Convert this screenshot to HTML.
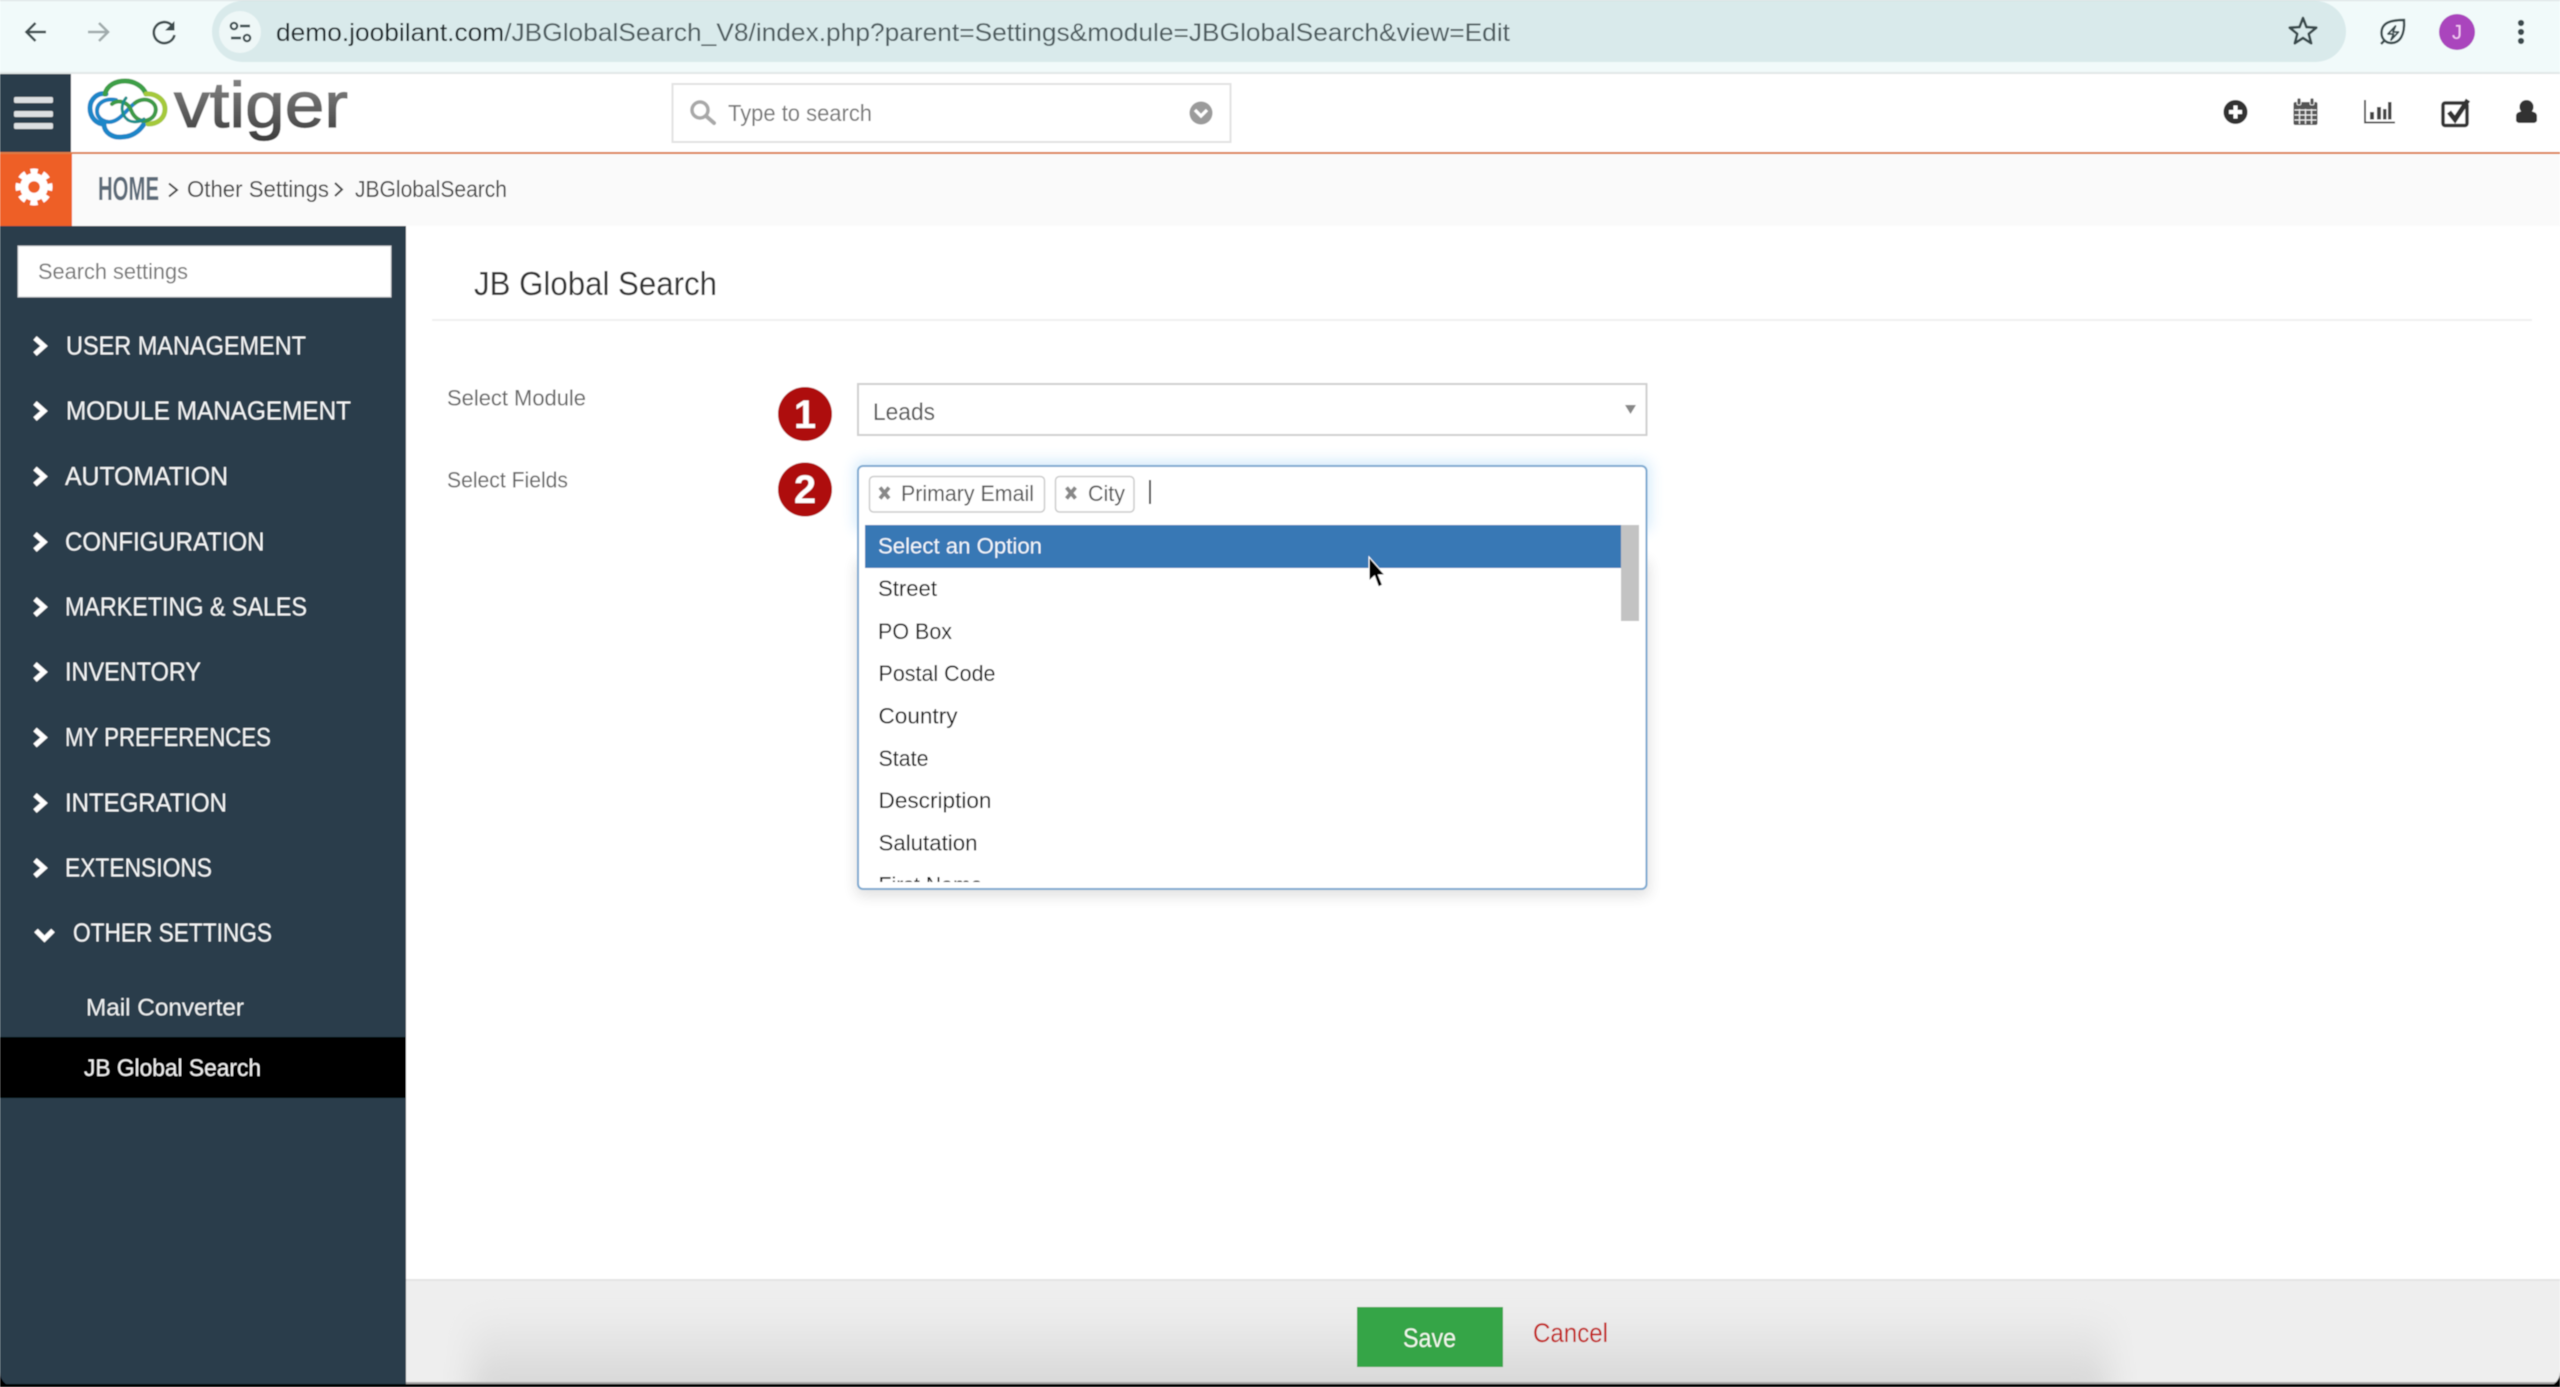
<!DOCTYPE html>
<html lang="en">
<head>
<meta charset="utf-8">
<title>JB Global Search</title>
<style>
html,body{margin:0;padding:0;background:#fff;width:2560px;height:1387px;overflow:hidden}
svg{display:block;position:absolute;left:0;top:0}
text{font-family:"Liberation Sans",sans-serif}
</style>
</head>
<body>
<svg xmlns="http://www.w3.org/2000/svg" width="2560" height="1387" viewBox="0 0 2560 1387">
<defs>
<filter id="soft" x="0" y="0" width="100%" height="100%"><feGaussianBlur stdDeviation="0.45"/></filter>
<filter id="b8" x="-10%" y="-30%" width="120%" height="160%"><feGaussianBlur stdDeviation="7"/></filter>
<filter id="b20" x="-10%" y="-60%" width="120%" height="220%"><feGaussianBlur stdDeviation="16"/></filter>
<linearGradient id="vt" x1="0" y1="0" x2="0" y2="1"><stop offset="0" stop-color="#8f8f8f"/><stop offset="1" stop-color="#3c3c3c"/></linearGradient>
<linearGradient id="fs" x1="0" y1="0" x2="0" y2="1"><stop offset="0" stop-color="#eaeaea"/><stop offset="0.500" stop-color="#dfdfdf"/><stop offset="1" stop-color="#cfcfcf"/></linearGradient>
<clipPath id="list"><rect x="860" y="525" width="780" height="357"/></clipPath>
<clipPath id="foot"><rect x="406" y="1281" width="2154" height="103"/></clipPath>
</defs>
<g filter="url(#soft)">
<rect width="2560" height="1387" fill="#ffffff"/>

<!-- browser chrome -->
<rect x="0" y="0" width="2560" height="73" fill="#f1fafa"/>
<rect x="0" y="0" width="2560" height="1" fill="#d6dedf"/>
<rect x="0" y="72" width="2560" height="2" fill="#e1e7e7"/>
<rect x="212" y="1" width="2134" height="61" rx="30.5" fill="#d9eaeb"/>
<path d="M46 32H27M35.500 23l-9 9 9 9" fill="none" stroke="#3d4b4d" stroke-width="2.600"/>
<path d="M88 32h20M99 23l9 9-9 9" fill="none" stroke="#a0abac" stroke-width="2.600"/>
<path d="M171.500 25A10.500 10.500 0 1 0 174.500 35" fill="none" stroke="#3d4b4d" stroke-width="2.600"/>
<path d="M174.500 21v9.500h-9.500z" fill="#3d4b4d"/>
<circle cx="240" cy="32" r="21" fill="#eef7f7"/>
<circle cx="234" cy="26" r="3.200" fill="none" stroke="#36464a" stroke-width="2.200"/>
<path d="M240 26h10M231 38h10" stroke="#36464a" stroke-width="2.400"/>
<circle cx="247" cy="38" r="3.200" fill="none" stroke="#36464a" stroke-width="2.200"/>
<text x="276" y="41" font-size="25" textLength="1234" lengthAdjust="spacingAndGlyphs" fill="#4e5c5f"><tspan fill="#1c282b">demo.joobilant.com</tspan>/JBGlobalSearch_V8/index.php?parent=Settings&amp;module=JBGlobalSearch&amp;view=Edit</text>
<polygon points="2303,18 2306.500,27.100 2316.300,27.700 2308.700,33.900 2311.200,43.300 2303,38 2294.800,43.300 2297.300,33.900 2289.700,27.700 2299.500,27.100" fill="none" stroke="#38484b" stroke-width="2.600" stroke-linejoin="round"/>
<path d="M2404 20C2392 20 2381.500 22 2381.500 33C2381.500 39 2386 43 2391 43C2400 43 2405 35 2404 20ZM2385 40l-4 4" fill="none" stroke="#38484b" stroke-width="2.400"/>
<path d="M2395.500 26L2388 34H2393.500L2391 40L2398.500 32H2393z" fill="none" stroke="#38484b" stroke-width="1.800" stroke-linejoin="round"/>
<circle cx="2457" cy="32" r="18" fill="#aa45bd"/>
<text x="2457" y="39" font-size="20" text-anchor="middle" fill="#f3c9f3">J</text>
<circle cx="2521" cy="23" r="3.100" fill="#3b4a4d"/><circle cx="2521" cy="32" r="3.100" fill="#3b4a4d"/><circle cx="2521" cy="41" r="3.100" fill="#3b4a4d"/>

<!-- app header -->
<rect x="0" y="74" width="71" height="78" fill="#2c3c4b"/>
<rect x="14" y="97" width="39" height="6" rx="1.500" fill="#dcdfe1"/>
<rect x="14" y="111" width="39" height="6" rx="1.500" fill="#dcdfe1"/>
<rect x="14" y="123" width="39" height="6" rx="1.500" fill="#dcdfe1"/>

<!-- vtiger logo -->
<g fill="none" stroke-linecap="round">
<path d="M106 94C98 92 90 99 90 108C90 118 97 124 104 124C104 133 113 138 122 137C131 137 139 132 144 124" stroke="#1b86c8" stroke-width="5"/>
<path d="M105 94C107 85 116 81 125 81C134 81 143 86 146 94" stroke="#3d9f46" stroke-width="5"/>
<path d="M146 94C156 93 165 100 165 109C165 118 158 124 148 124" stroke="#a5c93a" stroke-width="5"/>
<path d="M116 100C105 98 97 103 97 111C97 119 106 124 114 121C122 118 128 108 135 103" stroke="#1b86c8" stroke-width="4"/>
<path d="M112 104C118 99 128 102 131 110C134 118 141 123 148 120C156 117 158 108 153 103C148 98 140 99 135 103" stroke="#3c9a46" stroke-width="4"/>
<path d="M126 98C121 104 120 114 128 120C133 123 140 122 144 119" stroke="#1c8f8a" stroke-width="3"/>
</g>
<text x="174" y="127" font-size="64" textLength="174" lengthAdjust="spacingAndGlyphs" fill="url(#vt)" stroke="url(#vt)" stroke-width="1.200">vtiger</text>

<!-- global search -->
<rect x="672.500" y="84" width="558" height="58" fill="#fff" stroke="#e2e2e2" stroke-width="2"/>
<circle cx="700" cy="110" r="8" fill="none" stroke="#a8a8a8" stroke-width="3.500"/>
<path d="M706 116l8 7" stroke="#a8a8a8" stroke-width="4" stroke-linecap="round"/>
<text x="728" y="121" font-size="23" textLength="144" lengthAdjust="spacingAndGlyphs" fill="#777">Type to search</text>
<circle cx="1201" cy="113" r="11.500" fill="#9b9b9b"/>
<path d="M1195 110l6 6 6-6" fill="none" stroke="#fff" stroke-width="3.200"/>

<!-- header icons -->
<circle cx="2235.500" cy="112" r="12" fill="#333"/>
<path d="M2229 110h13v4h-13zM2233.500 105.500h4v13h-4z" fill="#fff"/>
<rect x="2293.500" y="102" width="24" height="23" rx="2" fill="#555"/>
<path d="M2299.500 109v15M2305.500 109v15M2311.500 109v15M2294.500 110h22M2294.500 115h22M2294.500 120h22" stroke="#fff" stroke-width="1.300" opacity="0.900"/>
<rect x="2297" y="98" width="4" height="7" rx="1.500" fill="#555" stroke="#fff" stroke-width="0.800"/>
<rect x="2310" y="98" width="4" height="7" rx="1.500" fill="#555" stroke="#fff" stroke-width="0.800"/>
<path d="M2365 100V122.500H2395" fill="none" stroke="#444" stroke-width="1.800"/>
<rect x="2370" y="112" width="4" height="7.500" fill="#444"/><rect x="2377" y="107" width="4" height="12.500" fill="#444"/><rect x="2383" y="109" width="3.500" height="10.500" fill="#444"/><rect x="2388" y="102" width="3.500" height="17.500" fill="#444"/>
<rect x="2443" y="103" width="24" height="22.500" rx="2" fill="none" stroke="#333" stroke-width="3.500"/>
<path d="M2449 112L2455 119.500L2468 100" fill="none" stroke="#333" stroke-width="5"/>
<circle cx="2526.500" cy="107" r="7" fill="#333"/>
<path d="M2516 120V116C2516 112 2521 111 2526.500 111C2532 111 2537 112 2537 116V120C2537 122 2535 123 2533 123H2520C2518 123 2516 122 2516 120Z" fill="#333"/>
<rect x="0" y="152" width="2560" height="2" fill="#dd7d45"/>

<!-- breadcrumb row -->
<rect x="72" y="154" width="2488" height="72" fill="#fafafa"/>
<rect x="0" y="154" width="72" height="72" fill="#ee5f26"/>
<circle cx="34" cy="187" r="14" fill="#fff"/>
<circle cx="34" cy="187" r="15.500" fill="none" stroke="#fff" stroke-width="6" stroke-dasharray="7 5.175" stroke-dashoffset="3.500"/>
<circle cx="34" cy="187" r="5.800" fill="#ee5f26"/>
<text x="98" y="200" font-size="33" font-weight="bold" textLength="61" lengthAdjust="spacingAndGlyphs" fill="#5c6a78">HOME</text>
<path d="M169 183.500L177 190L169 196.500" fill="none" stroke="#444" stroke-width="2"/>
<text x="187" y="197" font-size="23" textLength="142" lengthAdjust="spacingAndGlyphs" fill="#444">Other Settings</text>
<path d="M335 183L342 189.500L335 196" fill="none" stroke="#444" stroke-width="2"/>
<text x="355" y="197" font-size="23" textLength="152" lengthAdjust="spacingAndGlyphs" fill="#444">JBGlobalSearch</text>

<!-- sidebar -->
<rect x="0" y="226" width="406" height="1161" fill="#2c3c4b"/>
<rect x="18" y="246" width="373" height="51" fill="#fff" stroke="#c9ced2" stroke-width="1"/>
<text x="38" y="279" font-size="22" textLength="150" lengthAdjust="spacingAndGlyphs" fill="#777">Search settings</text>
<g fill="none" stroke="#fff" stroke-width="5">
<path d="M35 338L44 346L35 354"/><path d="M35 403L44 411L35 419"/><path d="M35 468.500L44 476.500L35 484.500"/>
<path d="M35 534L44 542L35 550"/><path d="M35 599L44 607L35 615"/><path d="M35 664L44 672L35 680"/>
<path d="M35 729.500L44 737.500L35 745.500"/><path d="M35 795L44 803L35 811"/><path d="M35 860L44 868L35 876"/>
<path d="M36 930.500L44.500 939L53 930.500"/>
</g>
<g font-size="26" fill="#f4f6f7">
<text x="66" y="354.500" textLength="240" lengthAdjust="spacingAndGlyphs">USER MANAGEMENT</text>
<text x="66" y="419.500" textLength="285" lengthAdjust="spacingAndGlyphs">MODULE MANAGEMENT</text>
<text x="65" y="485" textLength="163" lengthAdjust="spacingAndGlyphs">AUTOMATION</text>
<text x="65" y="550.500" textLength="199.500" lengthAdjust="spacingAndGlyphs">CONFIGURATION</text>
<text x="65" y="615.500" textLength="242" lengthAdjust="spacingAndGlyphs">MARKETING &amp; SALES</text>
<text x="65" y="680.500" textLength="136" lengthAdjust="spacingAndGlyphs">INVENTORY</text>
<text x="65" y="746" textLength="206" lengthAdjust="spacingAndGlyphs">MY PREFERENCES</text>
<text x="65" y="811.500" textLength="162" lengthAdjust="spacingAndGlyphs">INTEGRATION</text>
<text x="65" y="876.500" textLength="147" lengthAdjust="spacingAndGlyphs">EXTENSIONS</text>
<text x="73" y="941.500" textLength="199" lengthAdjust="spacingAndGlyphs">OTHER SETTINGS</text>
</g>
<text x="86" y="1015.500" font-size="24" textLength="158" lengthAdjust="spacingAndGlyphs" fill="#eef1f2">Mail Converter</text>
<rect x="0" y="1037" width="406" height="61" fill="#000"/>
<text x="84" y="1076" font-size="24" textLength="177" lengthAdjust="spacingAndGlyphs" fill="#f2f2f2">JB Global Search</text>

<!-- main -->
<text x="474" y="295" font-size="33" textLength="243" lengthAdjust="spacingAndGlyphs" fill="#333">JB Global Search</text>
<rect x="432" y="319" width="2100" height="2" fill="#f0f0f0"/>
<text x="447" y="405.500" font-size="22" textLength="139" lengthAdjust="spacingAndGlyphs" fill="#666">Select Module</text>
<text x="447" y="487.500" font-size="22" textLength="121" lengthAdjust="spacingAndGlyphs" fill="#666">Select Fields</text>

<circle cx="805" cy="414" r="27" fill="#ae0c0c"/>
<text x="805" y="428" font-size="40" font-weight="bold" text-anchor="middle" fill="#fff">1</text>
<circle cx="805" cy="489.500" r="27" fill="#ae0c0c"/>
<text x="805" y="503" font-size="40" font-weight="bold" text-anchor="middle" fill="#fff">2</text>

<rect x="858" y="384" width="788.500" height="51" fill="#fff" stroke="#cfcfcf" stroke-width="2"/>
<text x="873" y="420" font-size="24" textLength="62" lengthAdjust="spacingAndGlyphs" fill="#555">Leads</text>
<polygon points="1625,405 1636,405 1630.500,414" fill="#888"/>

<rect x="855" y="461" width="795" height="70" rx="6" fill="#a8d6f7" opacity="0.500" filter="url(#b8)"/>
<rect x="856" y="560" width="793" height="336" rx="6" fill="#000" opacity="0.120" filter="url(#b8)"/>
<rect x="858" y="466" width="788.500" height="423" rx="5" fill="#fff" stroke="#7ca9d0" stroke-width="2"/>
<rect x="869.500" y="476.500" width="175" height="35.500" rx="4" fill="#fff" stroke="#ccc" stroke-width="1.500"/>
<path d="M880 487.500l9 11M889 487.500l-9 11" stroke="#888" stroke-width="3.800"/>
<text x="901" y="501" font-size="22" textLength="133" lengthAdjust="spacingAndGlyphs" fill="#555">Primary Email</text>
<rect x="1055.500" y="476.500" width="78.500" height="35.500" rx="4" fill="#fff" stroke="#ccc" stroke-width="1.500"/>
<path d="M1066.500 487.500l9 11M1075.500 487.500l-9 11" stroke="#888" stroke-width="3.800"/>
<text x="1088" y="501" font-size="22" textLength="37" lengthAdjust="spacingAndGlyphs" fill="#555">City</text>
<rect x="1149" y="480" width="2" height="24" fill="#444"/>

<rect x="865" y="525" width="756" height="43" fill="#3778b5"/>
<rect x="1621" y="525" width="18" height="96" fill="#c3c3c3"/>
<g clip-path="url(#list)" font-size="22" fill="#111">
<text x="878" y="553.500" textLength="164" lengthAdjust="spacingAndGlyphs" fill="#f3f7fb">Select an Option</text>
<text x="878" y="596" textLength="59" lengthAdjust="spacingAndGlyphs">Street</text>
<text x="878" y="639" textLength="74" lengthAdjust="spacingAndGlyphs">PO Box</text>
<text x="878.500" y="681" textLength="117" lengthAdjust="spacingAndGlyphs">Postal Code</text>
<text x="878.500" y="723.500" textLength="79" lengthAdjust="spacingAndGlyphs">Country</text>
<text x="878.500" y="766" textLength="50" lengthAdjust="spacingAndGlyphs">State</text>
<text x="878.500" y="808" textLength="113" lengthAdjust="spacingAndGlyphs">Description</text>
<text x="878.500" y="850.500" textLength="99" lengthAdjust="spacingAndGlyphs">Salutation</text>
<text x="878.500" y="892.500" textLength="104" lengthAdjust="spacingAndGlyphs">First Name</text>
</g>
<polygon points="1369,557 1369,581 1374.500,576 1378.500,587 1382.500,585 1378.500,575 1385,575" fill="#000" stroke="#fff" stroke-width="1"/>

<!-- footer -->
<rect x="406" y="1279" width="2154" height="108" fill="#eeeeee"/>
<rect x="406" y="1279" width="2154" height="2" fill="#e3e3e3"/>
<g clip-path="url(#foot)"><rect x="470" y="1318" width="1640" height="90" fill="url(#fs)" filter="url(#b20)"/></g>
<rect x="1357" y="1307" width="146" height="60" fill="#35a547"/>
<text x="1403" y="1347" font-size="27" textLength="53" lengthAdjust="spacingAndGlyphs" fill="#f2f8ee">Save</text>
<text x="1533" y="1342" font-size="27" textLength="75" lengthAdjust="spacingAndGlyphs" fill="#c3201f">Cancel</text>

<!-- screen edge -->
<rect x="406" y="1382" width="2154" height="2" fill="#a9a9a9"/>
<rect x="0" y="1384" width="2560" height="3" fill="#000"/>
<path d="M0 1372V1387H15A15 15 0 0 1 0 1372Z" fill="#000"/>
<path d="M2560 1372V1387H2545A15 15 0 0 0 2560 1372Z" fill="#000"/>
</g>
</svg>
</body>
</html>
